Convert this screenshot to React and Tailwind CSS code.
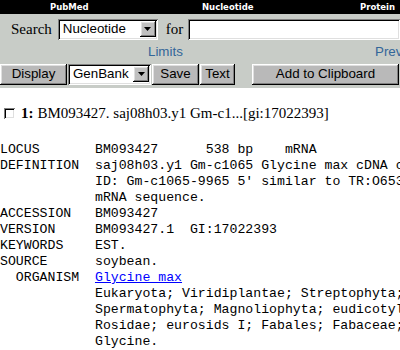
import React from "react";

const sans = "font-['Liberation_Sans',Arial,sans-serif]";
const serif = "font-['Liberation_Serif','Times_New_Roman',serif]";

// raised win9x button bevel
const raised =
  "shadow-[inset_-1px_-1px_#000,inset_1px_1px_#fff,inset_-2px_-2px_#808080,inset_2px_2px_#dfdfdf]";
// sunken field bevel
const sunken =
  "shadow-[inset_1px_1px_#808080,inset_-1px_-1px_#fff,inset_2px_2px_#000,inset_-2px_-2px_#dfdfdf]";

function Arrow() {
  return (
    <span className={`flex h-[16px] w-[16px] items-center justify-center bg-[#c0c0c0] ${raised}`}>
      <svg width="7" height="4" viewBox="0 0 7 4">
        <path d="M0 0h7L3.5 4z" fill="#000" />
      </svg>
    </span>
  );
}

function Select({ value, width }) {
  return (
    <div
      className={`flex h-[21px] items-center justify-between bg-white pl-[5px] pr-[2px] text-[13.33px] text-black ${sans} ${sunken}`}
      style={{ width }}
    >
      <span>{value}</span>
      <Arrow />
    </div>
  );
}

function Btn({ children, className = "" }) {
  return (
    <div
      className={`flex h-[21px] items-center justify-center bg-[#b9b9b9] text-[13.33px] text-black ${sans} ${raised} ${className}`}
    >
      {children}
    </div>
  );
}

const record = [
  ["LOCUS       BM093427      538 bp    mRNA            EST       06-DEC-2001"],
  ["DEFINITION  saj08h03.y1 Gm-c1065 Glycine max cDNA clone GENOME SYSTEMS CLONE"],
  ["            ID: Gm-c1065-9965 5' similar to TR:O65363 O65363 SUCROSE SYNTHASE,"],
  ["            mRNA sequence."],
  ["ACCESSION   BM093427"],
  ["VERSION     BM093427.1  GI:17022393"],
  ["KEYWORDS    EST."],
  ["SOURCE      soybean."],
  ["  ORGANISM  ", "Glycine max"],
  ["            Eukaryota; Viridiplantae; Streptophyta; Embryophyta; Tracheophyta;"],
  ["            Spermatophyta; Magnoliophyta; eudicotyledons; core eudicotyledons;"],
  ["            Rosidae; eurosids I; Fabales; Fabaceae; Papilionoideae; Phaseoleae;"],
  ["            Glycine."],
];

export default function App() {
  return (
    <div className="h-[350px] w-[400px] overflow-hidden bg-white">
      {/* top nav strip */}
      <div className="flex h-[14px] items-center bg-black text-[8.5px] font-bold leading-none text-white font-['DejaVu_Sans',Verdana,sans-serif]">
        <span className="w-[202px] pl-[50px]">PubMed</span>
        <span className="w-[158px]">Nucleotide</span>
        <span>Protein</span>
      </div>

      {/* search panel */}
      <div className="h-[74px] bg-[#c8ccc7]">
        <div className="flex items-center pt-[4px]">
          <span className={`pl-[11px] text-[15px] text-black ${serif}`}>Search</span>
          <div className="ml-[6px]">
            <Select value="Nucleotide" width={100} />
          </div>
          <span className={`ml-[8px] text-[15px] text-black ${serif}`}>for</span>
          <div className={`ml-[5px] h-[21px] flex-1 bg-white ${sunken}`} />
        </div>

        <div className={`flex h-[23px] items-center text-[13.33px] text-[#336699] ${sans}`}>
          <span className="pl-[148px]">Limits</span>
          <span className="ml-auto w-[25px]">Prev</span>
        </div>

        <div className="flex items-center">
          <Btn className="w-[67px]">Display</Btn>
          <div className="ml-[1px]">
            <Select value="GenBank" width={83} />
          </div>
          <Btn className="ml-[1px] w-[47px]">Save</Btn>
          <Btn className="ml-[1px] w-[35px]">Text</Btn>
          <Btn className="ml-[17px] w-[147px]">Add to Clipboard</Btn>
        </div>
      </div>

      {/* result header */}
      <div className={`mt-[16px] flex h-[18px] items-center text-[15px] leading-[18px] text-black ${serif}`}>
        <span className={`ml-[4px] mr-[6px] h-[11px] w-[11px] bg-white ${sunken}`} />
        <b className="mr-[4px]">1:</b>
        <span>BM093427. saj08h03.y1 Gm-c1...[gi:17022393]</span>
      </div>

      {/* genbank flat file */}
      <pre className="mt-[20px] whitespace-pre text-[13.2px] leading-[16px] text-black font-['Liberation_Mono','Courier_New',monospace]">
        {record.map((r, i) => (
          <div key={i}>
            {r[0]}
            {r[1] && <a href="#" className="text-[#0000ff] underline">{r[1]}</a>}
          </div>
        ))}
      </pre>
    </div>
  );
}
